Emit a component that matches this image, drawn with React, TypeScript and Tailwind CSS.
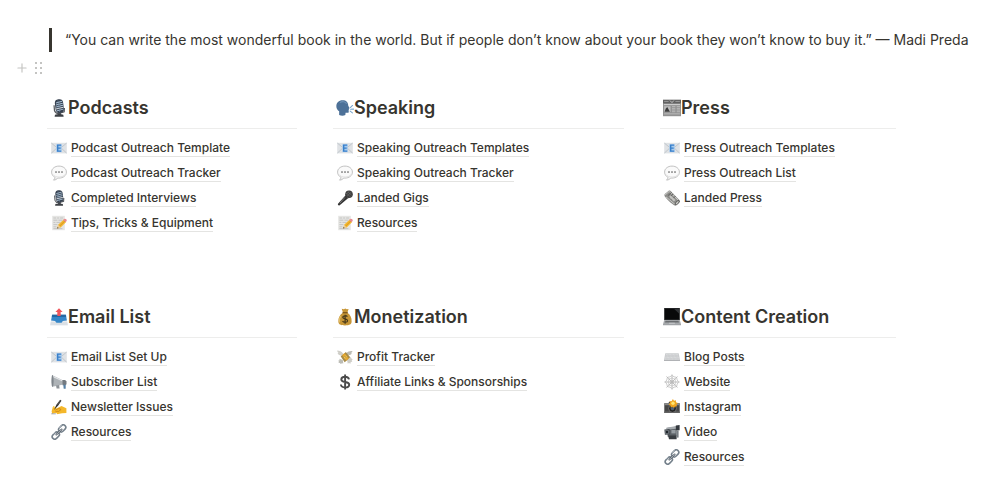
import type { ReactNode } from "react"
import { Plus } from "lucide-react"

type IconName =
  | "studioMic"
  | "speaking"
  | "newspaper"
  | "outbox"
  | "moneyBag"
  | "laptop"
  | "email"
  | "bubble"
  | "mic"
  | "memo"
  | "rolledNews"
  | "megaphone"
  | "writing"
  | "link"
  | "moneyWings"
  | "dollar"
  | "keyboard"
  | "web"
  | "camera"
  | "video"

const ICONS: Record<IconName, ReactNode> = {
  studioMic: (
    <>
      <path d="M3.6 5.5 4 10.4Q5 13 8 12.8L12.6 11.4 12.8 8" fill="none" stroke="#55585d" strokeWidth="1.1" />
      <path d="M7.2 12h2.4l.3 2.2H6.9z" fill="#4b4e54" />
      <path d="M4.4 14q3.8-1.2 7.4 0l.3 1.7H4.1z" fill="#3d4045" />
      <rect x="4.6" y=".2" width="7.4" height="12.2" rx="3.5" fill="#35404f" transform="rotate(-7 8 6)" />
      <path d="m5.3 3.6 5.4-1.5M5.3 5.4l6-1.6M5.5 7.2l6-1.6M5.8 10.6l6-1.6" stroke="#a9bfd4" strokeWidth=".9" />
      <path d="m5.4 8.9 6.4-1.5" stroke="#d7dce2" strokeWidth="1" />
      <path d="m7 1.3 1.6 10.4" stroke="#7990a8" strokeWidth=".5" />
    </>
  ),
  speaking: (
    <>
      <path
        d="M5.800 1.200C2.500 1.200.3 3.400.3 6.400c0 2.200 1.200 3.500 2.500 4.500v3.300c1.800.9 3.800.9 5.500.1l.2-2h1.900c.8 0 1-.5.9-1.200l-.1-1 .4-.5-.4-.7.9-.6-1.200-2.200C10.900 3 9.100 1.200 5.800 1.200Z"
        fill="#4d7198"
      />
      <path d="M3.400 3.200c2-1.400 4.800-1 6 .9" fill="none" stroke="#6f92b5" strokeWidth="1" />
      <path d="m12.700 7.600 2-1.900M13 9.200l2.600-.2M12.600 10.700l2 1.700" stroke="#76a5cc" strokeWidth=".9" strokeLinecap="round" />
    </>
  ),
  newspaper: (
    <>
      <path d="M0 .7h16v14.600H0z" fill="#929292" />
      <path d="M0 .7h16v3.200H0z" fill="#626262" />
      <path d="M1 2.200h4M11 2.200h4" stroke="#a4a4a4" strokeWidth=".7" />
      <path d="M6.200 1.400 8 3.200l1.600-1.800" fill="none" stroke="#ddd" strokeWidth=".7" />
      <path d="M.8 5h14.400" stroke="#ddd" strokeWidth=".8" />
      <path d="M1 6.400h5.700v5.300H1z" fill="#bcbcbc" />
      <path d="m1.400 11.400 1.100-3 1.300-1.200 1.100 2 1.300 2.200z" fill="#3d3d3d" />
      <path d="M8 6.800h3M12.200 6.800h3M8 8.300h3M12.200 8.300h3M8 9.800h3M12.200 9.800h3M8 11.300h3M12.200 11.300h3M1 13.200h14" stroke="#cecece" strokeWidth=".6" />
    </>
  ),
  outbox: (
    <>
      <path d="m1.200 9.600-1 5.800h15.600l-1-5.800z" fill="#eceff2" />
      <path d="M.7 12.200.2 15.400h15.600l-.5-3.200z" fill="#dbe0e5" />
      <path d="M1.800 6h12.400l.8 5.200-3.600.3-1.100 1.600H5.700l-1.200-1.600L1 11.200z" fill="#3586c8" />
      <path d="M2 6h12l.3 2H1.700z" fill="#2468a2" />
      <path d="m8 .2 3.200 3.300H9.500v3.700h-3V3.500H4.800z" fill="#f0555b" />
    </>
  ),
  moneyBag: (
    <>
      <path d="M5.100.7 7 1.100 8.300.4l1.200.7 1.700-.3-1.100 3.500c2.600 1.600 4 4.600 3.800 7.700-.1 2.300-1.700 3.500-5.900 3.500s-5.800-1.200-5.900-3.500c-.2-3.100 1.400-6.100 4.100-7.700z" fill="#c79637" />
      <path d="M5.800 4.200h4.600" stroke="#775117" strokeWidth="1.1" />
      <path d="M4.300 7.200C3 8.800 2.800 11 3.300 12.700" stroke="#e2bd65" fill="none" strokeWidth=".9" />
      <path d="M10.100 7.600C9.200 6.500 6 6.600 6 8.300c0 1.800 4.300 1.100 4.300 3 0 1.700-3.400 1.800-4.500.4M8.100 6v8" fill="none" stroke="#453718" strokeWidth="1.1" />
    </>
  ),
  laptop: (
    <>
      <path d="M1 0h14v10.800H1z" fill="#252729" />
      <path d="M1.800.8h12.400V10H1.800z" fill="#08090a" />
      <path d="m10 .8 4.200 4V.8z" fill="#303336" />
      <path d="M1 10.800h14l1 3.600H0z" fill="#a5a8ab" />
      <path d="M2.200 11.400h11.600l.4 1.400H1.800z" fill="#6a6d70" />
      <path d="M5.600 13h4.800l.3 1.100H5.300z" fill="#c7c9cb" />
      <path d="M0 14.400h16v.9H0z" fill="#8e9195" />
    </>
  ),
  email: (
    <>
      <path d="M.2 2.800h15.600v10.600H.2z" fill="#dfe2e5" />
      <path d="m.3 13.200 5.800-5.500m9.600 5.500L9.900 7.700M.3 3 8 9.400 15.700 3" fill="none" stroke="#b5bbc1" strokeWidth=".7" />
      <path d="M5.200 4.300h5.600v7.800H5.200z" fill="#a8cbed" />
      <path d="M10.200 5.100H6.700v6h3.500M6.700 8.100h3" fill="none" stroke="#3980cb" strokeWidth="1.400" />
    </>
  ),
  bubble: (
    <>
      <path d="M8 1.100C3.800 1.100.6 3.600.6 7.100c0 2.400 1.400 4.300 3.500 5.300-.1 1.200-.7 2-1.600 2.700 1.800 0 3.300-.8 4.200-2.100l1.300.1c4.200 0 7.400-2.500 7.400-6s-3.200-6-7.400-6Z" fill="#fafafa" stroke="#b3b3b3" strokeWidth=".8" />
      <path d="M2 9.500c1.800 3.400 10.300 3.600 12.400-.4" fill="none" stroke="#e0e0e0" strokeWidth="1" />
      <circle cx="5" cy="7.100" r=".8" fill="#555" />
      <circle cx="8" cy="7.100" r=".8" fill="#555" />
      <circle cx="11" cy="7.100" r=".8" fill="#555" />
    </>
  ),
  mic: (
    <>
      <path d="m8.600 5.200 2.700 2.900-8.600 7.100c-1 .7-2.200-.3-1.700-1.500z" fill="#353535" />
      <path d="m7.800 7.500-4.900 5.700" stroke="#878787" strokeWidth=".8" />
      <path d="M8.500 4.400 12 8" stroke="#9a9a9a" strokeWidth="1.600" />
      <circle cx="12" cy="4.200" r="3.800" fill="#3d3d3d" />
      <path d="m9.400 3 4 4M10.800 1.600l4 4M10 6.200l4.700-4.400M9 4.200 12.500 1" stroke="#858585" strokeWidth=".4" />
    </>
  ),
  memo: (
    <>
      <path d="M1.200.8h12.600v14.400H1.200z" fill="#e5e5e3" />
      <path d="M2.400 3h2.700m1 0h2m1 0h3M2.400 5.200h4m1 0h4M2.400 7.400h2m1 0h4M2.400 9.600h4M2.400 11.800h3M2.400 13.600h9" stroke="#b8b8b6" strokeWidth=".7" />
      <path d="m6.200 13.400.9-3.600 5.700-5.300 2.300 2.500-5.500 5.500z" fill="#f3b72e" />
      <path d="m8.200 11.500 5.800-5.700" stroke="#cf8e21" strokeWidth=".8" />
      <path d="m12.200 5 1.100-1.100c1.200-.8 3 .8 2.300 2.200l-1.100 1.200z" fill="#e88a91" />
      <path d="m6.200 13.400.9-3.600 2.600 2.600z" fill="#edcf9c" />
      <path d="m6.200 13.400.4-1.400 1 1z" fill="#333" />
    </>
  ),
  rolledNews: (
    <>
      <path d="M.5 4.300 4.700.8c.6-.5 1.300-.4 1.800.1l9.100 9.300-4.900 5.200c-2.300-.5-8-6-10.200-9.300z" fill="#8c8c89" />
      <path d="m1.200 4.800 4-3.300 9.400 9.100M2 6.900l9 7.500" fill="none" stroke="#cececb" strokeWidth=".9" />
      <path d="m4.100 5.500 3.500-3.200M5 7.900l4-4M7.500 10l4-4" stroke="#60605e" strokeWidth="1" />
      <path d="m6.600 5.200 4.900 4.700-1.600 1.600L5 7z" fill="#c2c2bf" />
      <ellipse cx="13.200" cy="12.800" rx="1.500" ry="3.300" transform="rotate(43 13.200 12.800)" fill="#555552" />
      <ellipse cx="13.200" cy="12.800" rx=".7" ry="2.200" transform="rotate(43 13.200 12.800)" fill="#cececb" />
    </>
  ),
  megaphone: (
    <>
      <path d="m.9 1.100 11.800 5.700c1.200.7 1 3.500-.2 3.700L1.500 12.800z" fill="#aeb3b7" />
      <path d="M1.300 2.200 11.800 7" stroke="#e3e6e8" strokeWidth="1.100" />
      <ellipse cx="1.500" cy="7" rx="1.100" ry="5.900" fill="#7f858b" />
      <path d="m5 11.600.6 3h3l-.5-3.600z" fill="#8d9297" />
      <path d="M11.400 6.100h2.800l1.300 1.300v2.800l-1.200 1.100h-2.700z" fill="#747a80" />
      <path d="M12.300 10.700h2.400v4.100h-2z" fill="#5680a5" />
    </>
  ),
  writing: (
    <>
      <path d="m.6 12.300 1.700-5.400 3.200 2.700 5-2.600 4.900 2.200v4.700l-4.300.3-4 .9c-1 .2-1.600-.4-1.500-1.100l-2.500-.1-2 .5z" fill="#f4b72a" />
      <path d="m4.300 11.200 3.500-1.800 2.300 1.100-2.600 2m-3 0 3.200-.2" fill="none" stroke="#c77b14" strokeWidth=".7" />
      <path d="M1.300 9.100C2.400 7.600 3.700 7.700 5.500 9" fill="none" stroke="#ffd45a" strokeWidth=".8" />
      <path d="m3 11 2.400-5.200L9.100.8l1.400 1L7.200 6.600z" fill="#303030" />
      <path d="m6.400 5.500 2.800-3.600" stroke="#7c7c7c" strokeWidth=".6" />
      <path d="M.3 14.800h4.500" stroke="#666" strokeWidth=".6" />
    </>
  ),
  link: (
    <>
      <rect x="7.200" y="1.900" width="8" height="5" rx="2.500" transform="rotate(-45 11.200 4.400)" fill="none" stroke="#74808b" strokeWidth="1.600" />
      <rect x=".8" y="9.100" width="8" height="5" rx="2.500" transform="rotate(-45 4.800 11.600)" fill="none" stroke="#74808b" strokeWidth="1.600" />
      <path d="m5.300 10.700 5.400-5.400" stroke="#4f5963" strokeWidth="1.700" strokeLinecap="round" />
      <path d="m8.300 3.800 2.400-2.300M1.900 10.200l2-2m1.400 2.500L10.700 5.300" stroke="#d7dde2" strokeWidth=".6" />
    </>
  ),
  moneyWings: (
    <>
      <path d="M6.200 4.800C4.800 2.400 2.500 1.600.2 1.600c.1 1.200.6 2 1.400 2.300-.4.1-.7.1-1 .1.3 1.300 1.200 2 2.400 2.200l2.200 1zM10 11l3.800-3 .6 1.500 1.300.7-1 1.200.6 1.300-1.600.4-.2 1.600-1.600-.6-1.100.6z" fill="#cfcec8" />
      <path d="M9.300 4.400c1.600-2.200 3.800-2.800 6.200-2.400-.3 1.300-1 1.800-1.800 2 .4.2.8.2 1.200.2-.5 1.500-1.800 1.800-3.300 1.700zM5.800 11.100l-3.400-1.400.2 1.500-1.500.5.9 1-.6 1.100 1.500.1.800 1 1.300-.6 1.300.3z" fill="#bcbcb5" />
      <path d="m3.700 7.600 5.200-4.700 4.300 5.300-5.500 5z" fill="#a58a49" />
      <path d="m5.100 6.300 2.400-2.200 4.300 5.300-2.500 2.300z" fill="#e2a52e" />
      <circle cx="8.300" cy="7.900" r="1.500" fill="#f2c756" />
      <path d="m7.700 7.200 1.300 1.400" stroke="#7c5c1c" strokeWidth=".8" />
    </>
  ),
  dollar: (
    <path
      d="M12 5.400C11.700 3.500 10.200 2.700 8.100 2.700 5.700 2.700 4.300 3.800 4.300 5.400c0 3.700 7.900 1.600 7.900 5.300 0 1.600-1.600 2.700-4.100 2.700-2.300 0-4-.9-4.200-2.900M8.100.6v14.800"
      fill="none"
      stroke="#4b4b4b"
      strokeWidth="1.900"
    />
  ),
  keyboard: (
    <>
      <path d="M1.300 4.200h13.400L16 11H0z" fill="#c9cbcd" />
      <path d="M0 11h16v.9H0z" fill="#a8aaad" />
      <path d="M1.900 5.500h12.200M1.600 7h12.800M1.300 8.500h13.400M1 10h14" stroke="#e0e1e2" strokeWidth=".7" strokeDasharray="1.1 .3" />
    </>
  ),
  web: (
    <g fill="none" stroke="#adadad" strokeWidth=".65">
      <path d="M8 .3v15.400M.3 8h15.400M2.400 2.400l11.200 11.200M13.600 2.400 2.400 13.600" />
      <path d="M8 1.500q2 1.700 4.600 1.900Q12.800 6 14.500 8q-1.700 2-1.900 4.600Q10 12.800 8 14.500q-2-1.700-4.600-1.900Q3.200 10 1.500 8q1.700-2 1.900-4.600Q6 3.200 8 1.500Z" />
      <path d="M8 3.800q1.300 1 2.900 1.200.2 1.700 1.200 3-1 1.300-1.200 3-1.600.2-2.900 1.200-1.300-1-2.900-1.200Q4.900 9.300 3.900 8q1-1.300 1.200-3Q6.700 4.800 8 3.800Z" />
      <circle cx="8" cy="8" r="1.900" />
    </g>
  ),
  camera: (
    <>
      <path d="M.3 4.200h4l1-1.500h5.400l1 1.500h4v9.700H.3z" fill="#464646" />
      <path d="M.3 4.200h15.400v2H.3z" fill="#898989" />
      <path d="M.3 12.500h15.400v1.400H.3z" fill="#676767" />
      <circle cx="8.500" cy="9.500" r="3.900" fill="#252525" stroke="#888" strokeWidth=".7" />
      <circle cx="8.500" cy="9.500" r="1.800" fill="#536170" />
      <path d="m8.900.1 1.100 1.600 2-.5-.1 2 2 .8-1.500 1.400.7 1.900-2.100.1-.9 1.700-1.600-1.300-1.900.8-.1-2.100-1.900-.9 1.500-1.500-.6-1.900 2.100.1z" fill="#f2a51c" />
      <circle cx="9" cy="4.200" r="1.700" fill="#ffe56e" />
    </>
  ),
  video: (
    <>
      <path d="M2.600 3.900 12.700 2.600v9.500l-9 .7z" fill="#5c6267" />
      <path d="M2.300 3.700 12.300 2v2.700l-9.600 1z" fill="#a5aaae" />
      <path d="M11.800 1.500 15.600.9v5.300l-3.700.1z" fill="#34393e" />
      <path d="M.4 5.400 5.600 5v5.500l-4.700.3z" fill="#41474d" />
      <circle cx="3" cy="8" r="1.900" fill="#20262b" stroke="#92999f" strokeWidth=".7" />
      <path d="M7.400 6h4.200v3.400H7.400z" fill="#969da2" />
      <path d="M4.100 11.500h8.500v3.700H5z" fill="#383d41" />
      <path d="M12.600 6.200h2v7.400h-2z" fill="#777e83" />
    </>
  ),
}

interface Section {
  title: string
  icon: IconName
  items: { label: string; icon: IconName }[]
}

const SECTIONS: Section[] = [
  {
    title: "Podcasts",
    icon: "studioMic",
    items: [
      { label: "Podcast Outreach Template", icon: "email" },
      { label: "Podcast Outreach Tracker", icon: "bubble" },
      { label: "Completed Interviews", icon: "studioMic" },
      { label: "Tips, Tricks & Equipment", icon: "memo" },
    ],
  },
  {
    title: "Speaking",
    icon: "speaking",
    items: [
      { label: "Speaking Outreach Templates", icon: "email" },
      { label: "Speaking Outreach Tracker", icon: "bubble" },
      { label: "Landed Gigs", icon: "mic" },
      { label: "Resources", icon: "memo" },
    ],
  },
  {
    title: "Press",
    icon: "newspaper",
    items: [
      { label: "Press Outreach Templates", icon: "email" },
      { label: "Press Outreach List", icon: "bubble" },
      { label: "Landed Press", icon: "rolledNews" },
    ],
  },
  {
    title: "Email List",
    icon: "outbox",
    items: [
      { label: "Email List Set Up", icon: "email" },
      { label: "Subscriber List", icon: "megaphone" },
      { label: "Newsletter Issues", icon: "writing" },
      { label: "Resources", icon: "link" },
    ],
  },
  {
    title: "Monetization",
    icon: "moneyBag",
    items: [
      { label: "Profit Tracker", icon: "moneyWings" },
      { label: "Affiliate Links & Sponsorships", icon: "dollar" },
    ],
  },
  {
    title: "Content Creation",
    icon: "laptop",
    items: [
      { label: "Blog Posts", icon: "keyboard" },
      { label: "Website", icon: "web" },
      { label: "Instagram", icon: "camera" },
      { label: "Video", icon: "video" },
      { label: "Resources", icon: "link" },
    ],
  },
]

const Emoji = ({ name, className }: { name: IconName; className: string }) => (
  <svg viewBox="0 0 16 16" className={className} aria-hidden="true">
    {ICONS[name]}
  </svg>
)

const LinkSection = ({ title, icon, items }: Section) => (
  <section>
    <h2 className="flex items-center border-b border-[#ededec] pt-3 pb-2 pl-[3px] text-lg leading-6 font-semibold whitespace-nowrap">
      <Emoji name={icon} className="size-[18px] shrink-0" />
      {title}
    </h2>
    <ul className="pt-[6px]">
      {items.map((item) => (
        <li key={item.label} className="flex h-[25px] items-center gap-1 pl-1">
          <Emoji name={item.icon} className="size-4 shrink-0" />
          <a
            href="#"
            className="border-b border-[#e4e4e2] text-xs leading-[17px] font-medium whitespace-nowrap"
          >
            {item.label}
          </a>
        </li>
      ))}
    </ul>
  </section>
)

export default function App() {
  return (
    <main className="min-h-screen bg-white pt-7 pb-6 pl-[47px] font-['Inter',sans-serif] text-[#37352f]">
      <blockquote className="ml-[2px] border-l-[3px] border-[#37352f] pl-[13px] text-sm leading-6">
        “You can write the most wonderful book in the world. But if people don’t know about your book they won’t know to
        buy it.” — Madi Preda
      </blockquote>
      <div className="-ml-8 flex h-8 items-center gap-1 text-[#c4c4c2]">
        <button type="button" aria-label="Add block">
          <Plus className="size-[14px]" strokeWidth={2} />
        </button>
        <button type="button" aria-label="Drag block">
          <svg viewBox="0 0 12 12" className="size-3" fill="currentColor" aria-hidden="true">
            <path d="M2 0h2v2H2zM7 0h2v2H7zM2 5h2v2H2zM7 5h2v2H7zM2 10h2v2H2zM7 10h2v2H7z" />
          </svg>
        </button>
      </div>
      <div className="mr-[109px] grid grid-cols-[250fr_291fr_236fr] gap-x-9 gap-y-[58px]">
        {SECTIONS.map((section) => (
          <LinkSection key={section.title} {...section} />
        ))}
      </div>
    </main>
  )
}
